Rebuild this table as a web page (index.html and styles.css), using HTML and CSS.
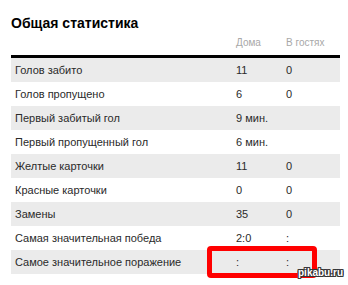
FILE: index.html
```html
<!DOCTYPE html>
<html lang="ru">
<head>
<meta charset="utf-8">
<title>Общая статистика</title>
<link rel="stylesheet" href="styles.css">
</head>
<body>
<div class="page">
  <h2 class="title">Общая статистика</h2>
  <table class="stats">
    <thead>
      <tr><th class="c-label"></th><th class="c-home">Дома</th><th class="c-away">В гостях</th></tr>
    </thead>
    <tbody>
      <tr><td>Голов забито</td><td>11</td><td>0</td></tr>
      <tr><td>Голов пропущено</td><td>6</td><td>0</td></tr>
      <tr><td>Первый забитый гол</td><td>9 мин.</td><td></td></tr>
      <tr><td>Первый пропущенный гол</td><td>6 мин.</td><td></td></tr>
      <tr><td>Желтые карточки</td><td>11</td><td>0</td></tr>
      <tr><td>Красные карточки</td><td>0</td><td>0</td></tr>
      <tr><td>Замены</td><td>35</td><td>0</td></tr>
      <tr><td>Самая значительная победа</td><td>2:0</td><td>:</td></tr>
      <tr><td>Самое значительное поражение</td><td>:</td><td>:</td></tr>
    </tbody>
  </table>
  <div class="highlight"></div>
  <div class="watermark">pikabu.ru</div>
</div>
</body>
</html>
```
FILE: styles.css
```css
html, body {
  margin: 0;
  padding: 0;
  background: #ffffff;
}
.page {
  position: relative;
  width: 348px;
  height: 285px;
  padding: 0 8px 0 11px;
  box-sizing: border-box;
  font-family: "Liberation Sans", Arial, sans-serif;
  overflow: hidden;
}
.title {
  margin: 0 0 2px;
  padding-top: 15px;
  font-size: 14px;
  line-height: 16px;
  font-weight: bold;
  color: #000;
}
.stats {
  width: 329px;
  border-collapse: collapse;
  border-spacing: 0;
  table-layout: fixed;
}
.stats th {
  height: 16px;
  padding: 0 0 6px 4px;
  font-size: 10px;
  line-height: 12px;
  font-weight: normal;
  color: #a8a8a8;
  text-align: left;
  vertical-align: bottom;
  border-bottom: 3px solid #000;
}
.c-label { width: 217px; }
.c-home { width: 46px; }
.c-away { width: 54px; }
.stats td {
  height: 24px;
  padding: 0 0 0 4px;
  font-size: 11px;
  line-height: 13px;
  color: #2a2a2a;
  vertical-align: middle;
  white-space: nowrap;
}
.stats tbody tr:nth-child(odd) td {
  background: #ebebeb;
}
.highlight {
  position: absolute;
  left: 207px;
  top: 246px;
  width: 110px;
  height: 32px;
  box-sizing: border-box;
  border: 5px solid #ff0000;
  border-radius: 4px;
}
.watermark {
  position: absolute;
  left: 298px;
  top: 267px;
  font-size: 10px;
  line-height: 12px;
  font-weight: bold;
  color: #ffffff;
  text-shadow: 1px 0 0 #333, -1px 0 0 #333, 0 1px 0 #333, 0 -1px 0 #333, 1px 1px 0 #333, -1px -1px 0 #333, 1px -1px 0 #333, -1px 1px 0 #333;
}
```
